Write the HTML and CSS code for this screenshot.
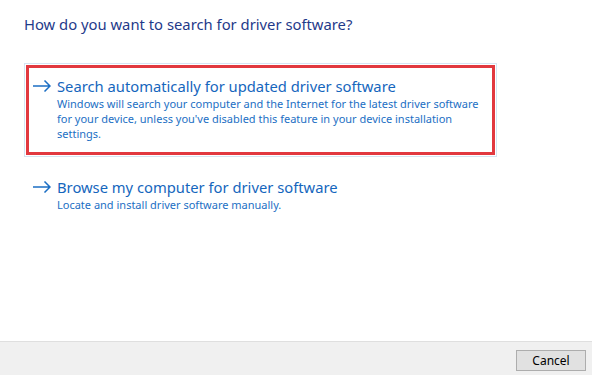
FILE: index.html
```html
<!doctype html>
<html lang="en">
  <head>
    <meta charset="UTF-8" />
    <title>Update Drivers</title>
    <link rel="stylesheet" href="styles.css">
  </head>
  <body>
    <main class="dialog-body">
      <h1 class="main-instruction">How do you want to search for driver software?</h1>

      <a href="#" class="command-link command-link--focused">
        <svg class="link-arrow" width="18" height="12" viewBox="0 0 18 12">
          <path d="M0 6 H17 M11.5 0.5 L17 6 L11.5 11.5" fill="none" stroke="#1c6fc4" stroke-width="1.5" />
        </svg>
        <span class="link-text">
          <span class="link-title">Search automatically for updated driver software</span>
          <span class="link-note">Windows will search your computer and the Internet for the latest driver software for your device, unless you've disabled this feature in your device installation settings.</span>
        </span>
      </a>

      <a href="#" class="command-link">
        <svg class="link-arrow" width="18" height="12" viewBox="0 0 18 12">
          <path d="M0 6 H17 M11.5 0.5 L17 6 L11.5 11.5" fill="none" stroke="#1c6fc4" stroke-width="1.5" />
        </svg>
        <span class="link-text">
          <span class="link-title">Browse my computer for driver software</span>
          <span class="link-note">Locate and install driver software manually.</span>
        </span>
      </a>
    </main>

    <footer class="button-bar">
      <button class="dialog-button">Cancel</button>
    </footer>
  </body>
</html>
```

FILE: styles.css
```css
* {
  margin: 0;
  padding: 0;
  box-sizing: border-box;
}

html,
body {
  height: 100%;
}

body {
  font-family: "Noto Sans", "Open Sans", sans-serif;
  background: #ffffff;
  display: flex;
  flex-direction: column;
  overflow: hidden;
}

.dialog-body {
  flex: 1;
  padding: 14px 0 0 24px;
}

.main-instruction {
  font-size: 14.8px;
  font-weight: normal;
  line-height: 20px;
  color: #1f3a8a;
  margin-bottom: 29px;
}

.command-link {
  display: flex;
  align-items: flex-start;
  width: 473px;
  padding: 12px 8px 15px 8px;
  border: 1px solid transparent;
  text-decoration: none;
  color: #1c6fc4;
}

.command-link + .command-link {
  margin-top: 7px;
}

.command-link--focused {
  border-color: #d5e4f3;
  outline: 3px solid #e2383f;
  outline-offset: -5px;
}

.link-arrow {
  flex-shrink: 0;
  margin-top: 4px;
  margin-right: 6px;
}

.link-text {
  display: flex;
  flex-direction: column;
}

.link-title {
  font-size: 14.75px;
  line-height: 20px;
  color: #1566bd;
}

.link-note {
  font-size: 11px;
  line-height: 15px;
  color: #1c6fc4;
}

.button-bar {
  height: 34px;
  background: #f0f0f0;
  border-top: 1px solid #dfdfdf;
  display: flex;
  justify-content: flex-end;
  align-items: flex-start;
  padding: 8px 6px 0 0;
}

.dialog-button {
  width: 70px;
  height: 21px;
  font-family: "Noto Sans", "Open Sans", sans-serif;
  font-size: 12px;
  color: #000000;
  background: #e1e1e1;
  border: 1px solid #adadad;
}
```
